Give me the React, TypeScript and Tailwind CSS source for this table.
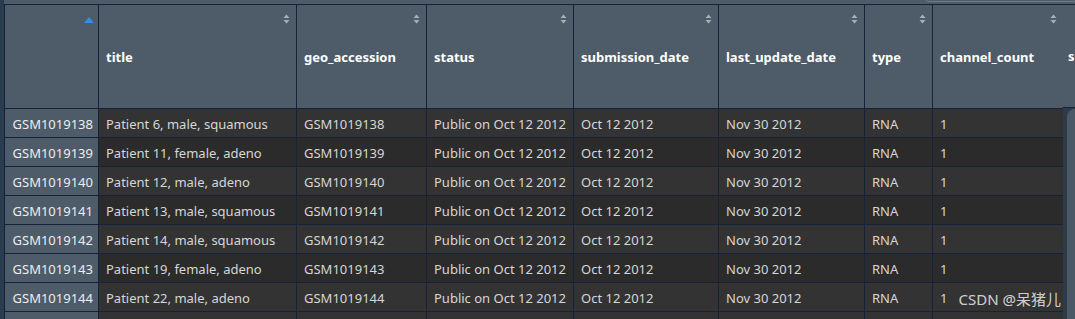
const columns = [
  { key: "title", label: "title", w: "w-[197px]" },
  { key: "geo", label: "geo_accession", w: "w-[129px]" },
  { key: "status", label: "status", w: "w-[146px]" },
  { key: "sub", label: "submission_date", w: "w-[144px]" },
  { key: "upd", label: "last_update_date", w: "w-[145px]" },
  { key: "type", label: "type", w: "w-[67px]" },
  { key: "ch", label: "channel_count", w: "w-[130px]" },
];

const rows = [
  ["GSM1019138", "Patient 6, male, squamous"],
  ["GSM1019139", "Patient 11, female, adeno"],
  ["GSM1019140", "Patient 12, male, adeno"],
  ["GSM1019141", "Patient 13, male, squamous"],
  ["GSM1019142", "Patient 14, male, squamous"],
  ["GSM1019143", "Patient 19, female, adeno"],
  ["GSM1019144", "Patient 22, male, adeno"],
].map(([id, title]) => ({
  id,
  cells: [title, id, "Public on Oct 12 2012", "Oct 12 2012", "Nov 30 2012", "RNA", "1"],
}));

function SortIcon() {
  return (
    <svg width="7" height="10" viewBox="0 0 7 10" className="absolute top-[9px] right-[6px]">
      <path d="M3.5 0.5 L6.5 4 L0.5 4 Z" fill="#a7afb7" />
      <path d="M0.5 6 L6.5 6 L3.5 9.5 Z" fill="#a7afb7" />
    </svg>
  );
}

function SortUp() {
  return (
    <svg width="10" height="6" viewBox="0 0 10 6" className="absolute top-[12px] right-[4px]">
      <path d="M5 0 L10 6 L0 6 Z" fill="#2e8fe8" />
    </svg>
  );
}

export default function App() {
  return (
    <div
      className="relative w-[1075px] h-[319px] overflow-hidden bg-[#2e3a46] text-[13px]"
      style={{ fontFamily: '"Noto Sans", "Noto Sans CJK SC", sans-serif' }}
    >
      {/* top strip */}
      <div className="h-[4px] bg-[#4e5c69] flex">
        <div className="w-[4px] bg-[#2a3c50]" />
      </div>
      <div className="absolute top-[-9px] left-[924px] right-[-4px] h-[11px] rounded-[5px] border border-[#6f7b87] bg-[#4e5c69]" />

      <div className="flex">
        <div className="w-[4px] h-[315px] bg-[#2a3c50] shrink-0" />
        <div className="flex flex-col bg-[#15233a] gap-px border-t border-l border-[#15233a]">
          {/* header */}
          <div className="flex gap-px h-[103px]">
            <div className="relative w-[93px] bg-[#4e5c69]">
              <SortUp />
            </div>
            {columns.map((c) => (
              <div
                key={c.key}
                className={`relative ${c.w} bg-[#4e5c69] flex items-center pl-[7px] pt-[2px] font-bold text-white`}
              >
                <SortIcon />
                {c.label}
              </div>
            ))}
          </div>
          {rows.map((r, i) => (
            <div key={r.id} className="flex gap-px h-[28px]">
              <div className="w-[93px] bg-[#4e5c69] text-[#ececec] flex items-center justify-end pr-[5px] pt-[3px]">
                {r.id}
              </div>
              {r.cells.map((v, j) => (
                <div
                  key={j}
                  className={`${columns[j].w} ${i % 2 === 0 ? "bg-[#333333]" : "bg-[#2b2b2b]"} text-[#d6d6d6] flex items-center pl-[7px] pt-[3px] whitespace-nowrap`}
                >
                  {v}
                </div>
              ))}
            </div>
          ))}
          <div className="flex gap-px h-[28px]">
            <div className="w-[93px] bg-[#4e5c69]" />
            {columns.map((c) => (
              <div key={c.key} className={`${c.w} bg-[#333333]`} />
            ))}
          </div>
        </div>
        {/* cut-off column + vertical scrollbar */}
        <div className="flex flex-col flex-1 border-t border-[#15233a]">
          <div className="h-[103px] bg-[#4e5c69] border-b border-[#15233a] flex items-center pl-[5px] pt-[2px] font-bold text-white">
            s
          </div>
          <div className="flex-1 bg-[#2e3a46] pl-[4px] pt-[1px]">
            <div className="w-[16px] h-[400px] rounded-full bg-[#4b5967]" />
          </div>
        </div>
      </div>

      <div className="absolute right-[14px] bottom-[9px] text-[15px] text-[#e4e4e4]/90 whitespace-nowrap">
        CSDN @呆猪儿
      </div>
    </div>
  );
}
